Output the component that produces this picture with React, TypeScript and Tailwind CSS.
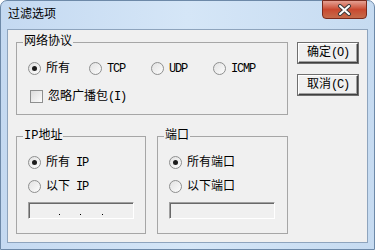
import type { ReactNode } from "react"

const font = { fontFamily: '"Liberation Mono", "Noto Sans CJK SC", monospace' }

function Latin({ children }: { children: ReactNode }) {
  return <span className="tracking-[-1.2px]">{children}</span>
}

function Radio({ checked, children }: { checked?: boolean; children: ReactNode }) {
  return (
    <label className="flex items-center gap-[5px] text-[12px] leading-none text-black">
      <span className="w-[13px] h-[13px] rounded-full border border-[#8e8f8f] bg-gradient-to-br from-[#e2e2e2] to-[#fcfcfc] flex items-center justify-center">
        {checked && <span className="w-[5px] h-[5px] rounded-full bg-[#1c1c1c]" />}
      </span>
      <span className="whitespace-pre">{children}</span>
    </label>
  )
}

function Group({ title, className, children }: { title: string; className: string; children: ReactNode }) {
  return (
    <fieldset className={`border border-[#a6a6a6] px-[6px] ${className}`}>
      <legend className="px-[1px] text-[12px] leading-[14px] text-black">{title}</legend>
      {children}
    </fieldset>
  )
}

function Button({ label, hotkey }: { label: string; hotkey: string }) {
  return (
    <button className="w-[60px] h-[20px] bg-[#f0f0f0] text-[12px] leading-none text-black border border-t-white border-l-white border-r-[#404040] border-b-[#404040] shadow-[inset_-1px_-1px_0_#a0a0a0,0_0_0_1px_#6f6f6f]">
      {label}<Latin>({hotkey})</Latin>
    </button>
  )
}

function SunkenBox({ children }: { children?: ReactNode }) {
  return (
    <div className="mt-[9px] ml-[5px] w-[106px] h-[17px] border border-t-[#a0a0a0] border-l-[#a0a0a0] border-r-white border-b-white shadow-[inset_1px_1px_0_#696969] bg-[#f0f0f0] flex items-end justify-around px-[20px] pb-[3px]">
      {children}
    </div>
  )
}

export default function App() {
  return (
    <div style={font} className="w-[375px] h-[250px] rounded-t-[7px] bg-gradient-to-r from-[#c4d9f1] via-[#d5e6f7] to-[#c6dbf1] border border-[#6d89a8] flex flex-col">
      <div className="h-[28px] flex items-start justify-between pl-[7px] pr-[7px]">
        <span className="mt-[7px] text-[12px] leading-[14px] text-black">过滤选项</span>
        <div className="w-[45px] h-[19px] -mt-[1px] rounded-b-[4px] border border-[#7a2a1c] bg-gradient-to-b from-[#e4a093] via-[#c9482f] to-[#c46a4a] flex items-center justify-center">
          <svg width="15" height="12" viewBox="0 0 15 12">
            <path d="M3 2 L12 10 M12 2 L3 10" stroke="#3b3b3b" strokeWidth="4" strokeLinecap="round" />
            <path d="M3 2 L12 10 M12 2 L3 10" stroke="#ffffff" strokeWidth="2" strokeLinecap="round" />
          </svg>
        </div>
      </div>
      <div className="mx-[6px] h-[214px] bg-[#f0f0f0] border border-[#8ea4bd] pl-[8px] pr-[9px] pt-[5px]">
        <div className="flex gap-[10px]">
          <Group title="网络协议" className="w-[272px] h-[80px]">
            <div className="flex mt-[13px] pl-[5px]">
              <div className="w-[61px]"><Radio checked>所有</Radio></div>
              <div className="w-[62px]"><Radio><Latin>TCP</Latin></Radio></div>
              <div className="w-[62px]"><Radio><Latin>UDP</Latin></Radio></div>
              <Radio><Latin>ICMP</Latin></Radio>
            </div>
            <label className="flex items-center gap-[5px] mt-[15px] pl-[7px] text-[12px] leading-none text-black">
              <span className="w-[13px] h-[13px] border border-[#8e8f8f] bg-gradient-to-br from-[#dcdcdc] to-[#fcfcfc]" />
              <span>忽略广播包<Latin>(I)</Latin></span>
            </label>
          </Group>
          <div className="flex flex-col gap-[12px] pt-[8px]">
            <Button label="确定" hotkey="O" />
            <Button label="取消" hotkey="C" />
          </div>
        </div>
        <div className="flex gap-[11px] mt-[14px]">
          <Group title="IP地址" className="w-[130px] h-[105px]">
            <div className="flex flex-col gap-[11px] mt-[13px] pl-[5px]">
              <Radio checked>所有<Latin> IP</Latin></Radio>
              <Radio>以下<Latin> IP</Latin></Radio>
            </div>
            <SunkenBox>
              <span className="w-[1px] h-[1px] bg-black" />
              <span className="w-[1px] h-[1px] bg-black" />
              <span className="w-[1px] h-[1px] bg-black" />
            </SunkenBox>
          </Group>
          <Group title="端口" className="w-[131px] h-[105px]">
            <div className="flex flex-col gap-[11px] mt-[13px] pl-[5px]">
              <Radio checked>所有端口</Radio>
              <Radio>以下端口</Radio>
            </div>
            <SunkenBox />
          </Group>
        </div>
      </div>
    </div>
  )
}
